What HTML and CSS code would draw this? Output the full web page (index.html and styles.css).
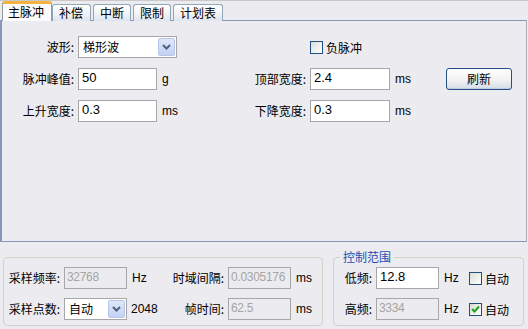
FILE: index.html
```html
<!DOCTYPE html>
<html>
<head>
<meta charset="utf-8">
<link rel="stylesheet" href="styles.css">
</head>
<body>
<div class="window">
  <div class="tabs">
    <div class="tab active">主脉冲</div>
    <div class="tab t2">补偿</div>
    <div class="tab">中断</div>
    <div class="tab">限制</div>
    <div class="tab">计划表</div>
  </div>
  <div class="panel">
    <div class="form">
      <div class="lbl">波形:</div>
      <div class="cell"><div class="select wide"><span class="val">梯形波</span><span class="arrow"><svg width="9" height="6" viewBox="0 0 9 6"><polyline points="1,1 4.5,4.5 8,1" fill="none" stroke="#4d6185" stroke-width="2"/></svg></span></div></div>
      <div></div>
      <div></div>
      <div class="cell span2"><span class="check"></span><span class="chklbl">负脉冲</span></div>
      <div></div>

      <div class="lbl">脉冲峰值:</div>
      <div class="cell"><div class="input">50</div></div>
      <div class="unit">g</div>
      <div class="lbl">顶部宽度:</div>
      <div class="cell"><div class="input">2.4</div></div>
      <div class="unit">ms</div>
      <div class="cell"><div class="button">刷新</div></div>

      <div class="lbl">上升宽度:</div>
      <div class="cell"><div class="input">0.3</div></div>
      <div class="unit">ms</div>
      <div class="lbl">下降宽度:</div>
      <div class="cell"><div class="input">0.3</div></div>
      <div class="unit">ms</div>
      <div></div>
    </div>
  </div>
  <div class="bottom">
    <div class="group g1">
      <div class="lbl">采样频率:</div>
      <div class="cell"><div class="input dis">32768</div></div>
      <div class="unit">Hz</div>
      <div class="lbl">时域间隔:</div>
      <div class="cell"><div class="input dis">0.0305176</div></div>
      <div class="unit">ms</div>

      <div class="lbl">采样点数:</div>
      <div class="cell"><div class="select small"><span class="val">自动</span><span class="arrow"><svg width="9" height="6" viewBox="0 0 9 6"><polyline points="1,1 4.5,4.5 8,1" fill="none" stroke="#4d6185" stroke-width="2"/></svg></span></div></div>
      <div class="unit u2">2048</div>
      <div class="lbl">帧时间:</div>
      <div class="cell"><div class="input dis">62.5</div></div>
      <div class="unit">ms</div>
    </div>
    <div class="group g2">
      <span class="legend">控制范围</span>
      <div class="lbl">低频:</div>
      <div class="cell"><div class="input">12.8</div></div>
      <div class="unit">Hz</div>
      <div class="cell"><span class="check"></span><span class="chklbl">自动</span></div>

      <div class="lbl">高频:</div>
      <div class="cell"><div class="input dis">3334</div></div>
      <div class="unit">Hz</div>
      <div class="cell"><span class="check on"><svg width="11" height="11" viewBox="0 0 11 11"><polyline points="2,5 4.5,7.5 9,2.5" fill="none" stroke="#21a121" stroke-width="2"/></svg></span><span class="chklbl">自动</span></div>
    </div>
  </div>
</div>
</body>
</html>
```

FILE: styles.css
```css
* { box-sizing: border-box; }
html, body {
  margin: 0;
  padding: 0;
  background: #ecebef;
}
body {
  font-family: "Liberation Sans", "Noto Sans CJK SC", sans-serif;
  font-size: 12px;
  color: #000;
  width: 528px;
  height: 329px;
  overflow: hidden;
}
.window {
  width: 528px;
  height: 329px;
  border-top: 1px solid #c9c9cc;
}
.tabs {
  display: flex;
  align-items: flex-end;
  height: 20px;
  padding-left: 2px;
  position: relative;
  z-index: 2;
  margin-bottom: -1px;
}
.tab {
  height: 17px;
  padding: 0 6px;
  margin-right: 2px;
  border: 1px solid #91a7b4;
  border-bottom: none;
  border-radius: 3px 3px 0 0;
  background: linear-gradient(#ffffff, #f3f4f8 50%, #dde4f0);
  line-height: 15px;
  font-size: 12px;
  font-family: "Noto Sans CJK SC", sans-serif;
}
.tab.active {
  height: 20px;
  width: 50px;
  padding: 0 5px;
  margin-right: 0;
  background: #fbfbfd;
  border-color: #919b9c;
  border-top: 3px solid #f3b33d;
  line-height: 16px;
}
.tab.t2 { width: 39px; }
.panel {
  height: 222px;
  border: 1px solid #8797b5;
  border-left-width: 2px;
  border-right-color: #a9adb8;
  margin-right: 1px;
  padding-top: 15px;
}
.form {
  display: grid;
  grid-template-columns: 76px 79px 60px 93px 80px 56px 66px;
  grid-template-rows: 22px 22px 22px;
  row-gap: 10px;
}
.lbl {
  text-align: right;
  padding-right: 4px;
  line-height: 22px;
  font-family: "Noto Sans CJK SC", sans-serif;
  white-space: nowrap;
}
.unit {
  line-height: 22px;
  padding-left: 5px;
  white-space: nowrap;
}
.cell {
  display: flex;
  align-items: center;
  height: 22px;
}
.span2 { grid-column: span 2; }
.input {
  width: 100%;
  height: 22px;
  border: 1px solid #a7a7a7;
  background: #fff;
  padding: 0 3px;
  line-height: 18px;
  font-size: 13px;
  white-space: nowrap;
  overflow: hidden;
}
.input.dis {
  background: transparent;
  color: #a5a5a5;
  font-size: 12px;
  letter-spacing: -0.3px;
  padding-left: 2px;
}
.select {
  display: flex;
  height: 22px;
  border: 1px solid #a7a7a7;
  background: #fff;
  flex: none;
}
.select.wide { width: 99px; }
.select.small { width: 63px; }
.select .val {
  flex: 1;
  padding-left: 4px;
  line-height: 20px;
  font-family: "Noto Sans CJK SC", sans-serif;
  font-size: 12px;
}
.select .arrow {
  width: 17px;
  margin: 1px;
  border: 1px solid #b7c6e8;
  border-radius: 2px;
  background: linear-gradient(#dfe7f9, #c3d2f3);
  display: flex;
  align-items: center;
  justify-content: center;
}
.check {
  width: 13px;
  height: 13px;
  border: 1px solid #1c5180;
  background: linear-gradient(135deg, #dcdcd6, #ffffff);
  flex: none;
  display: flex;
  align-items: center;
  justify-content: center;
}
.chklbl {
  margin-left: 3px;
  font-family: "Noto Sans CJK SC", sans-serif;
}
.button {
  width: 66px;
  height: 22px;
  border: 1px solid #264f86;
  border-radius: 3px;
  background: linear-gradient(#ffffff, #f2f2f4 55%, #d5dce8);
  text-align: center;
  line-height: 19px;
  font-family: "Noto Sans CJK SC", sans-serif;
  box-shadow: inset 0 -1px 0 #c0cbe0;
}
.bottom {
  display: flex;
  gap: 10px;
  padding: 15px 4px 0 3px;
}
.group {
  position: relative;
  height: 69px;
  border: 1px solid #d3d2c7;
  border-radius: 4px;
  display: grid;
  grid-template-rows: 22px 22px;
  row-gap: 9px;
  padding-top: 9px;
}
.g1 {
  width: 320px;
  grid-template-columns: 60px 63px 43px 58px 63px 30px;
}
.g2 {
  width: 191px;
  grid-template-columns: 42px 63px 30px 54px;
}
.u2 { padding-left: 4px; }
.legend {
  position: absolute;
  top: -9px;
  left: 6px;
  padding: 0 3px;
  background: #ecebef;
  color: #1e4fb4;
  font-family: "Noto Sans CJK SC", sans-serif;
  line-height: 16px;
}
```
